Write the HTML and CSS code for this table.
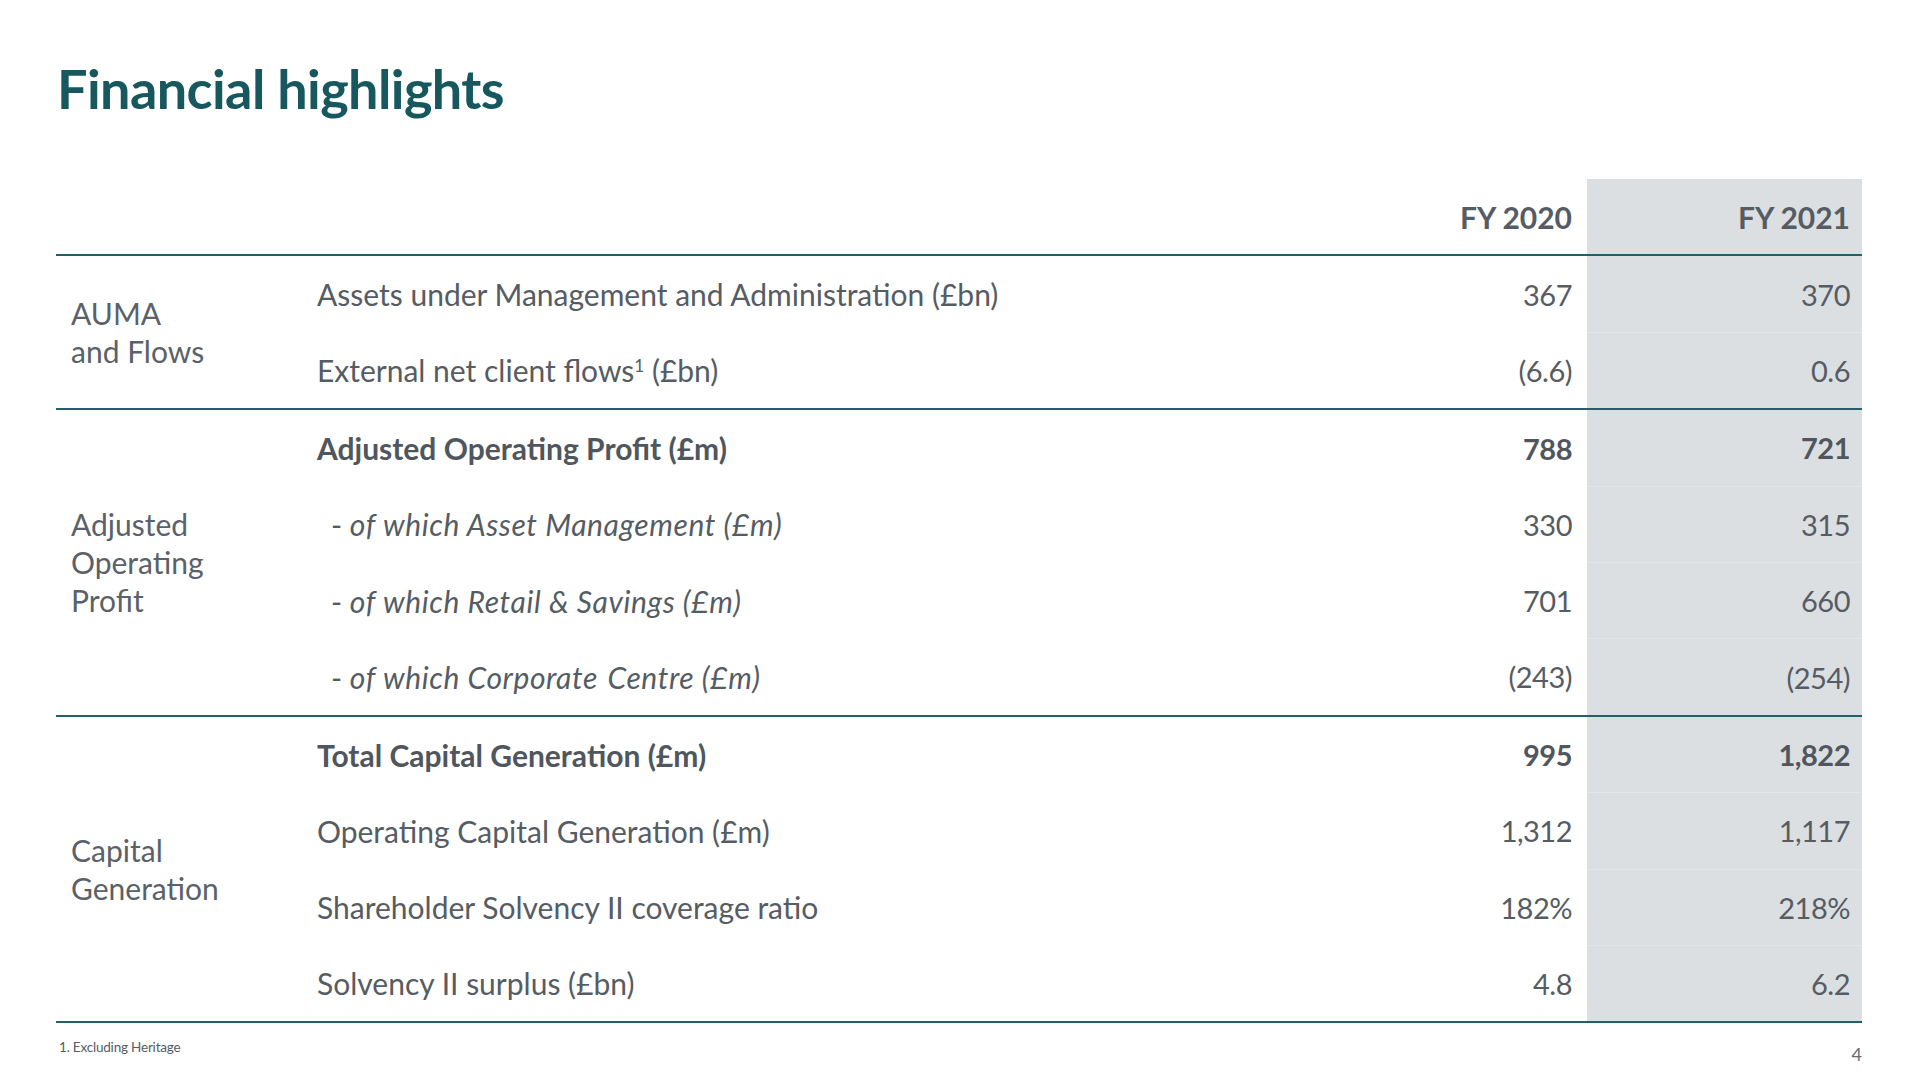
FILE: index.html
```html
<!DOCTYPE html>
<html lang="en">
<head>
<meta charset="utf-8">
<title>Financial highlights</title>
<link rel="stylesheet" href="styles.css">
</head>
<body>
<div class="slide">
  <h1 class="title">Financial highlights</h1>
  <table class="fin">
    <colgroup>
      <col class="c-cat">
      <col class="c-label">
      <col class="c-fy20">
      <col class="c-fy21">
    </colgroup>
    <thead>
      <tr class="head">
        <th></th>
        <th></th>
        <th class="num">FY 2020</th>
        <th class="num hl">FY 2021</th>
      </tr>
    </thead>
    <tbody class="grp">
      <tr>
        <td class="cat" rowspan="2">AUMA<br>and Flows</td>
        <td class="lbl">Assets under Management and Administration (£bn)</td>
        <td class="num">367</td>
        <td class="num hl">370</td>
      </tr>
      <tr>
        <td class="lbl">External net client flows<sup>1</sup> (£bn)</td>
        <td class="num">(6.6)</td>
        <td class="num hl">0.6</td>
      </tr>
    </tbody>
    <tbody class="grp">
      <tr class="bold">
        <td class="cat" rowspan="4">Adjusted<br>Operating<br>Profit</td>
        <td class="lbl">Adjusted Operating Profit (£m)</td>
        <td class="num">788</td>
        <td class="num hl">721</td>
      </tr>
      <tr>
        <td class="lbl sub">- <em>of which Asset Management (£m)</em></td>
        <td class="num">330</td>
        <td class="num hl">315</td>
      </tr>
      <tr>
        <td class="lbl sub">- <em>of which Retail &amp; Savings (£m)</em></td>
        <td class="num">701</td>
        <td class="num hl">660</td>
      </tr>
      <tr>
        <td class="lbl sub">- <em>of which Corporate <span class="gap">Centre</span> (£m)</em></td>
        <td class="num">(243)</td>
        <td class="num hl">(254)</td>
      </tr>
    </tbody>
    <tbody class="grp">
      <tr class="bold">
        <td class="cat" rowspan="4">Capital<br>Generation</td>
        <td class="lbl">Total Capital Generation (£m)</td>
        <td class="num">995</td>
        <td class="num hl">1,822</td>
      </tr>
      <tr>
        <td class="lbl">Operating Capital Generation (£m)</td>
        <td class="num">1,312</td>
        <td class="num hl">1,117</td>
      </tr>
      <tr>
        <td class="lbl">Shareholder Solvency II coverage ratio</td>
        <td class="num">182%</td>
        <td class="num hl">218%</td>
      </tr>
      <tr>
        <td class="lbl">Solvency II surplus (£bn)</td>
        <td class="num">4.8</td>
        <td class="num hl">6.2</td>
      </tr>
    </tbody>
  </table>
  <div class="foot">
    <span class="note">1. Excluding Heritage</span>
    <span class="page">4</span>
  </div>
</div>
</body>
</html>
```
FILE: styles.css
```css
html, body {
  margin: 0;
  padding: 0;
  background: #ffffff;
}
body {
  font-family: Lato, "Open Sans", "Liberation Sans", sans-serif;
  color: #555c64;
}
.slide {
  width: 1920px;
  height: 1080px;
  box-sizing: border-box;
  padding: 0 58px 0 56px;
  overflow: hidden;
}
.title {
  margin: 0;
  padding: 58px 0 0 1px;
  height: 179px;
  box-sizing: border-box;
  font-size: 54px;
  line-height: 62px;
  font-weight: 700;
  color: #17585f;
  letter-spacing: -0.6px;
}
.fin {
  width: 1806px;
  border-collapse: collapse;
  table-layout: fixed;
  font-size: 30px;
  letter-spacing: 0;
}
.c-cat { width: 261px; }
.c-fy20 { width: 300px; }
.c-fy21 { width: 275px; }
.fin th, .fin td {
  padding: 0;
  height: 75.4px;
  vertical-align: middle;
  text-align: left;
  font-weight: 400;
}
.head th {
  font-weight: 700;
  color: #555c64;
  border-bottom: 2px solid #225f66;
}
.grp {
  border-bottom: 2px solid #225f66;
}
.grp tr + tr td.hl {
  border-top: 1px solid #e3e5e8;
}
.num {
  text-align: right !important;
  padding-right: 15px !important;
  font-size: 29px;
  letter-spacing: -0.5px;
}
.head th.num {
  font-size: 30px;
  letter-spacing: 0;
}
.hl {
  background: #dcdfe2;
  padding-right: 12px !important;
}
.cat {
  padding-left: 15px !important;
  line-height: 38px;
  color: #5a6168;
}
.lbl {
  white-space: nowrap;
}
.lbl.sub {
  padding-left: 14px !important;
}
.lbl em {
  font-style: italic;
  letter-spacing: 0.6px;
}
.gap {
  margin-left: 2px;
}
.bold td {
  font-weight: 700;
  color: #50565d;
}
.bold td.cat {
  font-weight: 400;
  color: #5a6168;
}
sup {
  font-size: 17px;
  line-height: 0;
  vertical-align: 10px;
}
.foot {
  display: flex;
  justify-content: space-between;
  align-items: flex-start;
  padding: 16px 0 0 3px;
}
.note {
  font-size: 13.5px;
  color: #555c64;
  letter-spacing: -0.2px;
}
.page {
  font-size: 18px;
  color: #666c72;
  margin-top: 4px;
}
```
